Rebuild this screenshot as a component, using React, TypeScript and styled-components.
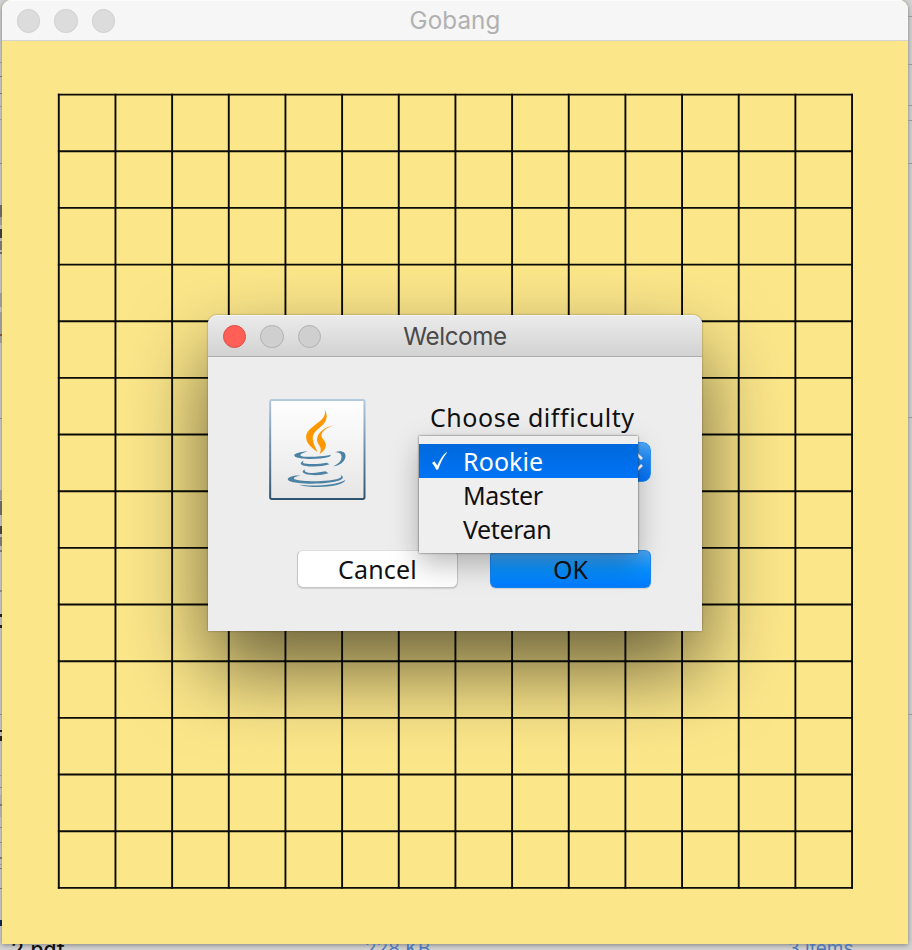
import React from "react";
import styled, { createGlobalStyle } from "styled-components";

const GlobalStyle = createGlobalStyle`
  * { box-sizing: border-box; }
  html, body { margin: 0; padding: 0; }
  body { width: 912px; height: 950px; overflow: hidden; }
`;

const UI_FONT = `"Noto Sans", "Open Sans", sans-serif`;
const TITLE_FONT = `Inter, Roboto, sans-serif`;

const Desktop = styled.main`
  position: relative;
  width: 912px;
  height: 950px;
  overflow: hidden;
  background: #d2d2d2;
`;

const BackgroundEdge = styled.svg`
  position: absolute;
  inset: 0;
`;

const DesktopText = styled.span<{ $x: number; $y: number; $size: number; $color: string; $spacing?: number; $weight?: number }>`
  position: absolute;
  left: ${(p) => p.$x}px;
  top: ${(p) => p.$y}px;
  font: ${(p) => p.$weight ?? 400} ${(p) => p.$size}px/24px ${TITLE_FONT};
  letter-spacing: ${(p) => p.$spacing ?? 0}px;
  white-space: nowrap;
  color: ${(p) => p.$color};
`;

const GameWindow = styled.section`
  position: absolute;
  left: 2px;
  top: 0;
  width: 906px;
  height: 944px;
  display: flex;
  flex-direction: column;
  overflow: hidden;
  border-radius: 9px 9px 0 0;
  background: #fbe68a;
`;

const GameShadow = styled.div`
  position: absolute;
  left: 2px;
  top: 0;
  width: 906px;
  height: 944px;
  border-radius: 9px 9px 0 0;
  box-shadow: 0 1px 5px rgba(0, 0, 0, 0.4);
`;

const TitleBar = styled.header<{ $active?: boolean }>`
  display: grid;
  grid-template-columns: 120px 1fr 120px;
  align-items: center;
  flex: none;
  height: ${(p) => (p.$active ? 42 : 41)}px;
  background: ${(p) => (p.$active ? "linear-gradient(#ebebeb, #d2d2d2)" : "#f6f6f6")};
  border-top: ${(p) => (p.$active ? "1px solid #f5f5f5" : "1px solid #fcfcfc")};
  border-bottom: 1px solid ${(p) => (p.$active ? "#adadad" : "#d5d5d8")};
`;

const Lights = styled.div`
  display: flex;
  gap: 14.6px;
  padding: 1px 0 0 14.6px;
`;

const Light = styled.i<{ $kind: "close" | "active" | "idle" }>`
  flex: none;
  width: 23.2px;
  height: 23.2px;
  border-radius: 50%;
  background: ${(p) => ({ close: "#ff5f57", active: "#cfcfcf", idle: "#dcdcdc" })[p.$kind]};
  border: 1px solid ${(p) => ({ close: "#e2483f", active: "#b1b1b1", idle: "#cfcfcf" })[p.$kind]};
`;

const Title = styled.h1<{ $active?: boolean }>`
  margin: 0;
  padding-top: 1px;
  text-align: center;
  font: 400 24.2px/30px ${TITLE_FONT};
  letter-spacing: ${(p) => (p.$active ? -0.35 : 0.1)}px;
  color: ${(p) => (p.$active ? "#4a4a4a" : "#b1b1b1")};
`;

const Board = styled.svg`
  display: block;
  flex: none;
`;

const Dialog = styled.section`
  position: absolute;
  left: 208px;
  top: 315px;
  width: 494px;
  height: 316px;
  display: flex;
  flex-direction: column;
  border-radius: 9px 9px 0 0;
  background: #ededed;
  box-shadow: 0 0 2px rgba(0, 0, 0, 0.45), 0 38px 80px rgba(0, 0, 0, 0.58);

  > header { border-radius: 9px 9px 0 0; }
`;

const Content = styled.div`
  display: flex;
  justify-content: space-between;
  height: 193px;
  padding: 42px 51px 0 61px;
`;

const Form = styled.div`
  width: 232px;
  position: relative;
`;

const Prompt = styled.label`
  display: block;
  height: 43px;
  padding-left: 11px;
  font: 400 25px/36px ${UI_FONT};
  letter-spacing: 0.55px;
  white-space: nowrap;
  color: #111;
`;

const Combo = styled.div`
  display: flex;
  justify-content: flex-end;
  margin-left: 3px;
  height: 40px;
  border-radius: 8px;
  background: #fff;
  overflow: hidden;
`;

const ComboArrows = styled.div`
  width: 36px;
  height: 40px;
  border: 1px solid #2b93f5;
  border-radius: 0 8px 8px 0;
  background: linear-gradient(#4fa8f8, #1a87fb 50%, #0673fb);
`;

const Menu = styled.ul`
  position: absolute;
  left: 0;
  top: 37px;
  width: 219px;
  height: 117px;
  margin: 0;
  padding: 8px 0 7px;
  list-style: none;
  background: #efefef;
  box-shadow: 0 0 2px rgba(0, 0, 0, 0.65), 0 11px 27px rgba(0, 0, 0, 0.27);
  z-index: 1;
`;

const MenuItem = styled.li<{ $selected?: boolean; $spacing: number }>`
  display: grid;
  grid-template-columns: 44px 1fr;
  align-items: center;
  height: 34px;
  font: 400 25px/34px ${UI_FONT};
  letter-spacing: ${(p) => p.$spacing}px;
  color: ${(p) => (p.$selected ? "#fff" : "#111")};
  background: ${(p) => (p.$selected ? "linear-gradient(#0069db, #0073f6)" : "transparent")};

  svg { display: block; margin-left: 12px; }
`;

const Actions = styled.footer`
  display: flex;
  justify-content: flex-end;
  gap: 32px;
  padding-right: 51px;
`;

const Button = styled.button<{ $primary?: boolean; $spacing: number }>`
  width: 161px;
  height: 38px;
  padding: 0 0 1px;
  border-radius: 6px;
  border: 1px solid ${(p) => (p.$primary ? "#1584f0" : "#c6c6c6")};
  border-top-color: ${(p) => (p.$primary ? "#318ee0" : "#dedede")};
  background: ${(p) => (p.$primary ? "linear-gradient(#4ba6f5, #0992ff 50%, #007aff)" : "#fff")};
  box-shadow: 0 1px 1px rgba(0, 0, 0, 0.12);
  font: 400 25px/34px ${UI_FONT};
  letter-spacing: ${(p) => p.$spacing}px;
  color: #111;
`;

const STEP = 56.66;
const lines = Array.from({ length: 15 }, (_, i) => i * STEP);

const leftMarks: [number, number, string][] = [
  [62, 1, "#999"], [76, 1, "#777"], [93, 1, "#777"], [106, 1, "#999"], [119, 1, "#999"], [163, 1, "#888"],
  [205, 12, "#666"], [217, 8, "#999"], [229, 9, "#3b3b3b"], [241, 9, "#777"], [252, 2, "#666"],
  [293, 14, "#999"], [312, 31, "#999"], [334, 2, "#754"], [418, 1, "#888"], [490, 10, "#999"],
  [501, 14, "#666"], [526, 8, "#444"], [537, 9, "#777"], [550, 2, "#777"], [590, 2, "#888"], [714, 1, "#888"],
  [775, 1, "#999"], [787, 1, "#888"], [795, 22, "#aaa"], [804, 2, "#777"], [827, 1, "#888"], [842, 1, "#888"],
  [857, 2, "#777"], [864, 1, "#999"], [868, 1, "#777"], [888, 1, "#777"], [920, 6, "#125"],
];
const rightMarks = [16, 64, 105, 120, 163, 417, 714];

function JavaIcon() {
  return (
    <svg width="97" height="101" viewBox="42 42 290 303" aria-label="Java">
      <defs>
        <linearGradient id="javaFill" x1="0" y1="0" x2="0" y2="1">
          <stop offset="0" stopColor="#fff" />
          <stop offset="1" stopColor="#e6e6e6" />
        </linearGradient>
        <linearGradient id="javaEdge" x1="0" y1="0" x2="0" y2="1">
          <stop offset="0" stopColor="#b2c9df" />
          <stop offset="0.5" stopColor="#6d8daa" />
          <stop offset="1" stopColor="#2f536f" />
        </linearGradient>
      </defs>
      <rect x="45" y="45" width="283" height="297" rx="5" fill="url(#javaFill)" stroke="url(#javaEdge)" strokeWidth="6" />
      <g fill="#ff9800">
        <path d="M209 74C219 92 216 108 198 124C182 138 171 147 173 162C174 176 181 188 187 201C169 189 153 175 153 157C153 138 168 130 186 115C203 101 212 94 209 74Z" />
        <path d="M237 121C212 129 199 140 199 151C199 163 213 168 212 181C211 194 203 201 193 207C197 198 198 192 195 186C190 176 184 171 186 160C189 140 211 126 237 121Z" />
      </g>
      <g fill="#4c83a4">
        <path d="M158 199C139 205 131 210 138 213C154 218 198 215 228 209L223 215C193 224 137 224 120 215C109 208 132 200 158 199Z" />
        <path d="M239 202C258 194 273 201 271 215C269 232 251 242 234 244C248 237 259 229 259 215C259 205 251 202 239 202Z" />
        <path d="M146 227C140 233 145 235 154 236C176 239 197 236 215 233L223 238C199 246 167 246 147 242C133 239 134 231 146 227Z" />
        <path d="M151 253C145 258 151 262 160 263C178 265 195 262 211 259L220 265C194 273 166 271 151 267C139 263 141 256 151 253Z" />
        <path d="M135 272C120 274 112 279 119 283C150 293 230 289 252 280C260 277 260 273 255 270C268 274 264 282 254 286C221 299 125 299 102 288C88 279 113 270 135 272Z" />
        <path d="M131 299C171 304 242 302 271 285C263 308 168 311 131 299Z" />
      </g>
    </svg>
  );
}

export default function App() {
  return (
    <>
      <GlobalStyle />
      <Desktop>
        <GameShadow />
        <BackgroundEdge width="912" height="950">
          {leftMarks.map(([y, h, fill]) => <rect key={y} x="0" y={y} width="2" height={h} fill={fill} />)}
          {rightMarks.map((y) => <rect key={y} x="908" y={y} width="4" height="1" fill="#999" />)}
          <rect x="0" y="614" width="2" height="3" fill="#222" />
          <rect x="0" y="625" width="2" height="3" fill="#222" />
          <rect x="0" y="730" width="2" height="2" fill="#222" />
          <rect x="0" y="736" width="2" height="5" fill="#222" />
        </BackgroundEdge>
        <DesktopText $x={11} $y={938} $size={21} $color="#111" $spacing={0.1} $weight={500}>2.pdf</DesktopText>
        <DesktopText $x={365} $y={937} $size={19} $color="#4b75b5">228 KB</DesktopText>
        <DesktopText $x={788} $y={937} $size={19} $color="#4b75b5">3 items</DesktopText>
        <GameWindow>
          <TitleBar>
            <Lights>
              <Light $kind="idle" /><Light $kind="idle" /><Light $kind="idle" />
            </Lights>
            <Title>Gobang</Title>
          </TitleBar>
          <Board width="906" height="903">
            <g transform="translate(56.8 53.6)" stroke="#0b0b05" strokeWidth="1.9" strokeLinecap="square">
              {lines.map((n) => <line key={`r${n}`} x1="0" x2={STEP * 14} y1={n} y2={n} />)}
              {lines.map((n) => <line key={`c${n}`} y1="0" y2={STEP * 14} x1={n} x2={n} />)}
            </g>
          </Board>
        </GameWindow>
        <Dialog>
          <TitleBar $active>
            <Lights>
              <Light $kind="close" /><Light $kind="active" /><Light $kind="active" />
            </Lights>
            <Title $active>Welcome</Title>
          </TitleBar>
          <Content>
            <JavaIcon />
            <Form>
              <Prompt>Choose difficulty</Prompt>
              <Combo>
                <ComboArrows>
                  <svg width="34" height="38" viewBox="0 0 34 38" fill="none" stroke="#fff" strokeWidth="2.6">
                    <path d="M15 16L20.5 10.5L26 16M15 22L20.5 27.5L26 22" />
                  </svg>
                </ComboArrows>
              </Combo>
              <Menu>
                <MenuItem $selected $spacing={0.1}>
                  <svg width="18" height="20" viewBox="0 0 18 20" fill="#fff">
                    <path d="M1 12L3.5 10.2L6.3 14.6C8.7 8.9 11.4 4.4 15.6 1L16 1.4C12.3 6.1 9.4 11.8 7.2 18.4L5.2 18.7C4.1 16 2.8 13.8 1 12Z" />
                  </svg>
                  <span>Rookie</span>
                </MenuItem>
                <MenuItem $spacing={-0.4}><i /><span>Master</span></MenuItem>
                <MenuItem $spacing={-0.4}><i /><span>Veteran</span></MenuItem>
              </Menu>
            </Form>
          </Content>
          <Actions>
            <Button $spacing={0.2}>Cancel</Button>
            <Button $primary $spacing={0}>OK</Button>
          </Actions>
        </Dialog>
      </Desktop>
    </>
  );
}
